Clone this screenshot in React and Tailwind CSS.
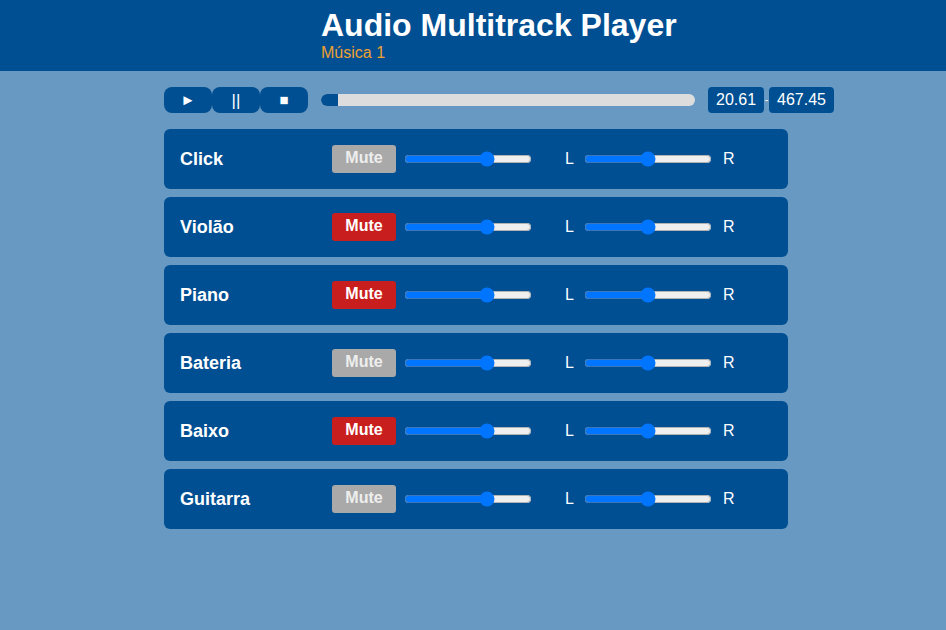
import { useState } from 'react'

const tracks = [
    { name: 'Click', muted: false },
    { name: 'Violão', muted: true },
    { name: 'Piano', muted: true },
    { name: 'Bateria', muted: false },
    { name: 'Baixo', muted: true },
    { name: 'Guitarra', muted: false },
]

function TrackRow({ track }) {
    const [vol, setVol] = useState(67)
    const [pan, setPan] = useState(0)
    return (
        <div className="h-[60px] w-[624px] rounded-md bg-[#004f93] flex items-center pl-4 text-white">
            <div className="w-[152px] text-[18px] font-bold">{track.name}</div>
            <button className={`w-16 h-7 rounded-[3px] text-[16px] font-bold leading-none pb-[3px] ${track.muted ? 'bg-[#c81e1e] text-white' : 'bg-[#a9a9a9] text-[#eeeeee]'}`}>
                Mute
            </button>
            <input type="range" min="0" max="100" value={vol} onChange={(e) => setVol(e.target.value)}
                className="w-[128px] m-0 ml-2 mb-[1px]" />
            <span className="ml-[33px] text-[16px] w-[19px] mb-[1px]">L</span>
            <input type="range" min="-1" max="1" step="0.01" value={pan} onChange={(e) => setPan(e.target.value)}
                className="w-[128px] m-0 mb-[1px]" />
            <span className="ml-[11px] text-[16px] mb-[1px]">R</span>
        </div>
    )
}

export default function App() {
    return (
        <div className="min-h-[630px] bg-[#6899c2] font-['Liberation_Sans',Arial,sans-serif]">
            {/* Header */}
            <div className="h-[71px] bg-[#004f93] pl-[321px] pt-[6px]">
                <h1 className="text-[32px] font-bold text-white leading-[38px]">Audio Multitrack Player</h1>
                <p className="text-[16px] text-[#f0a030] leading-[18px]">Música 1</p>
            </div>

            <div className="pl-[164px] pt-4">
                {/* Transport */}
                <div className="flex items-center h-[26px]">
                    <button className="w-12 h-[26px] rounded-lg bg-[#004f93] text-white text-[15px] leading-none pb-[2px]">►</button>
                    <button className="w-12 h-[26px] rounded-lg bg-[#004f93] text-white text-[17px] leading-none">||</button>
                    <button className="w-12 h-[26px] rounded-lg bg-[#004f93] text-white text-[15px] leading-none pb-[2px]">■</button>
                    <div className="ml-[13px] w-[374px] h-3 rounded-full bg-[#dddddd] overflow-hidden">
                        <div className="h-full w-[17px] bg-[#004f93]"></div>
                    </div>
                    <div className="ml-[13px] h-[26px] px-2 rounded-sm bg-[#004f93] text-white text-[16px] flex items-center">20.61</div>
                    <span className="w-[5px] text-center text-[#eeeeee] text-[12px]">-</span>
                    <div className="h-[26px] px-2 rounded-sm bg-[#004f93] text-white text-[16px] flex items-center">467.45</div>
                </div>

                {/* Tracks */}
                <div className="mt-4 flex flex-col gap-2">
                    {tracks.map((t) => <TrackRow key={t.name} track={t} />)}
                </div>
            </div>
        </div>
    )
}
